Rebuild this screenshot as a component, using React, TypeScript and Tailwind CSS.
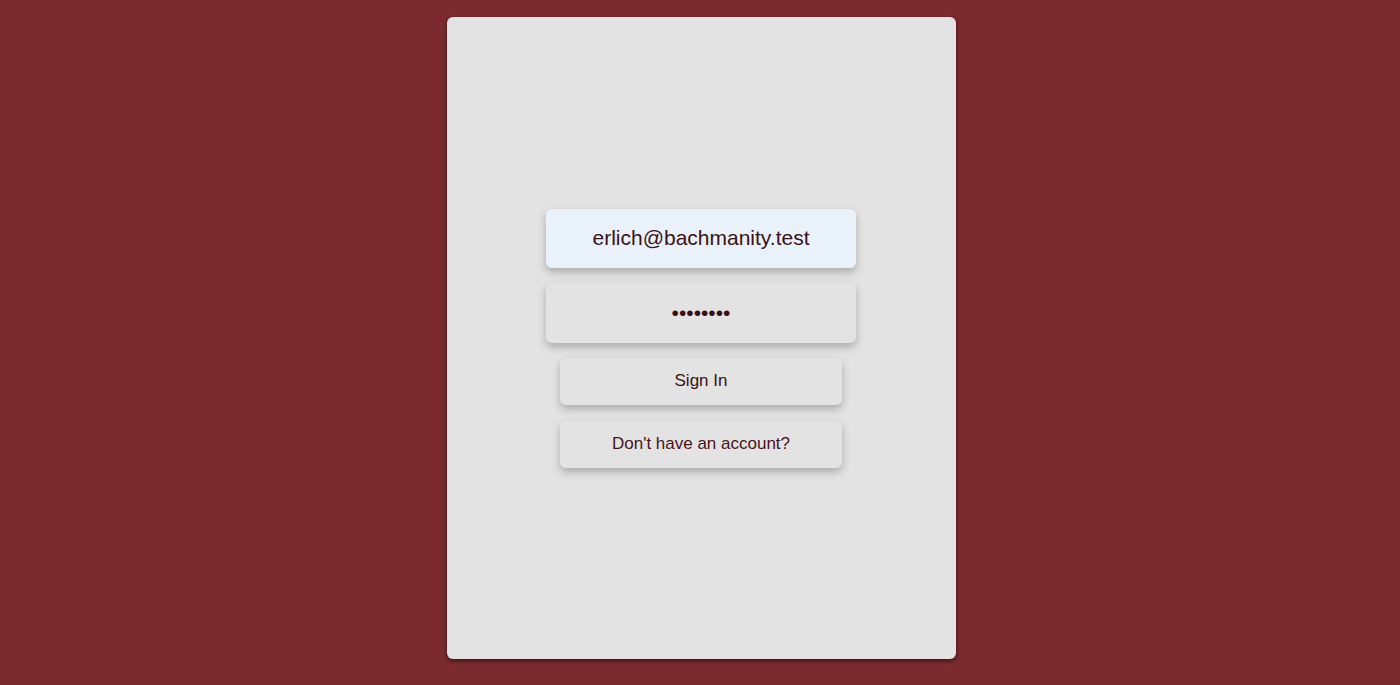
export default function App() {
  return (
    <div className="flex h-[685px] w-full justify-center bg-[#7b2a2e] pl-[2px] pt-[17px] font-['Liberation_Sans',Arial,sans-serif]">
      <div className="flex h-[642px] w-[509px] flex-col items-center justify-center rounded-md bg-[#e3e3e3] shadow-[0_2px_4px_rgba(0,0,0,0.55)]">
        <form className="flex flex-col items-center" onSubmit={(e) => e.preventDefault()}>
          <input
            type="email"
            defaultValue="erlich@bachmanity.test"
            className="h-[59px] w-[310px] rounded-md bg-[#e9f1fb] text-center text-[21px] text-[#3a1014] shadow-[0_4px_8px_rgba(0,0,0,0.25)] outline-none"
          />
          <input
            type="password"
            defaultValue="password"
            className="mt-[15px] h-[60px] w-[310px] rounded-md bg-[#e3e3e3] text-center text-[21px] text-[#3a1014] shadow-[0_4px_8px_rgba(0,0,0,0.25)] outline-none"
          />
          <button className="mt-[15px] h-[47px] w-[282px] rounded-md bg-[#e3e3e3] text-[17px] text-[#3a1014] shadow-[0_4px_8px_rgba(0,0,0,0.25)]">
            Sign In
          </button>
          <button
            type="button"
            className="mt-[16px] h-[47px] w-[282px] rounded-md bg-[#e3e3e3] text-[17px] text-[#4a1216] shadow-[0_4px_8px_rgba(0,0,0,0.25)]"
          >
            Don't have an account?
          </button>
        </form>
      </div>
    </div>
  );
}
